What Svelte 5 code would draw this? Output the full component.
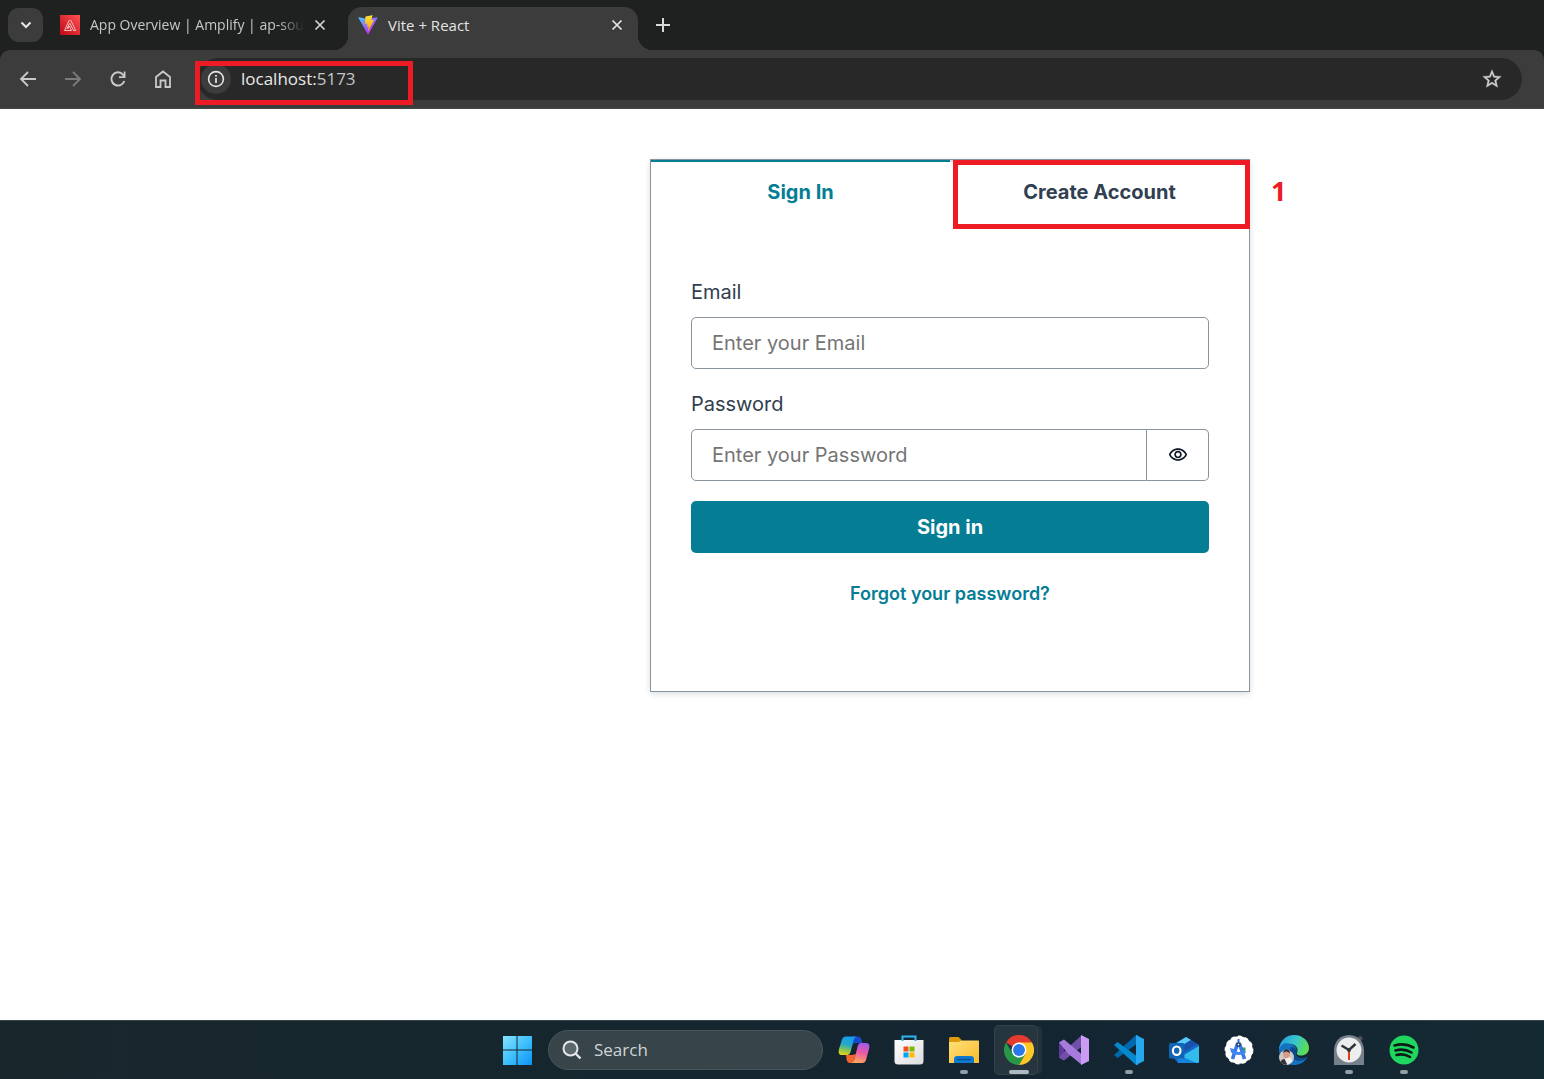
<script>
  let email = $state('');
  let password = $state('');
  let shown = $state(false);
  const tabs = ['Sign In', 'Create Account'];
</script>

<div class="screen">
  <header class="browser">
    <div class="tabstrip">
      <button class="tab-search" aria-label="Search tabs">
        <svg width="12" height="8" viewBox="0 0 12 8"><path d="M1.500 1.500 6 6l4.500-4.500" fill="none" stroke="#e8e8e8" stroke-width="2" /></svg>
      </button>
      <div class="tab">
        <svg class="favicon" width="20" height="20" viewBox="0 0 20 20">
          <defs><linearGradient id="amp" x1="0" y1="1" x2="1" y2="0"><stop stop-color="#bd0816" /><stop offset="1" stop-color="#ff5252" /></linearGradient></defs>
          <path fill="url(#amp)" d="M0 0h20v20H0z" />
          <path d="M9.300 5 4.500 15.500h7L9.300 11l-1.300 2.800M10.500 4.800 15.700 15.500h-2.200L9.600 7.800M9.200 9l-2.400 5" fill="none" stroke="#ffe3e3" stroke-width=".8" />
        </svg>
        <span class="tab-title faded">App Overview | Amplify | ap-sou</span>
        <button class="close" aria-label="Close App Overview">
          <svg width="12" height="12" viewBox="0 0 12 12"><path d="m1.500 1.500 9 9m0-9-9 9" stroke="#d5d5d5" stroke-width="1.700" /></svg>
        </button>
      </div>
      <div class="tab active">
        <svg class="favicon" width="20" height="20" viewBox="0 0 410 404">
          <defs>
            <linearGradient id="v1" x1="6" y1="33" x2="235" y2="344" gradientUnits="userSpaceOnUse"><stop stop-color="#41d1ff" /><stop offset="1" stop-color="#bd34fe" /></linearGradient>
            <linearGradient id="v2" x1="194" y1="9" x2="236" y2="293" gradientUnits="userSpaceOnUse"><stop stop-color="#ffea83" /><stop offset=".08" stop-color="#ffdd35" /><stop offset="1" stop-color="#ffa800" /></linearGradient>
          </defs>
          <path d="M399.600 59.500 215.600 388.500c-3.800 6.800-13.600 6.800-17.400.1L10.600 59.600C6.400 52.300 12.700 43.400 21 44.900l184.200 32.900c1.200.2 2.400.2 3.500 0L389.100 44.900c8.300-1.500 14.600 7.300 10.500 14.600z" fill="url(#v1)" />
          <path d="M293 1.600 156.800 28.300c-2.200.4-3.900 2.300-4 4.600l-8.400 141.400c-.2 3.300 2.900 5.900 6.100 5.200l37.900-8.800c3.600-.8 6.800 2.300 6 5.900l-11.200 55.200c-.8 3.700 2.700 6.900 6.300 5.800l23.400-7.100c3.600-1.100 7.100 2.100 6.300 5.800l-17.900 86.600c-1.100 5.400 6.100 8.400 9.100 3.700l2-3.100 111-221.400c1.900-3.700-1.300-7.900-5.400-7.100l-39 7.500c-3.700.7-6.800-2.700-5.800-6.300l25.500-88.300c1-3.600-2.100-7.100-5.800-6.300z" fill="url(#v2)" />
        </svg>
        <span class="tab-title">Vite + React</span>
        <button class="close" aria-label="Close Vite + React">
          <svg width="12" height="12" viewBox="0 0 12 12"><path d="m1.500 1.500 9 9m0-9-9 9" stroke="#e6e6e6" stroke-width="1.700" /></svg>
        </button>
      </div>
      <button class="new-tab" aria-label="New tab">
        <svg width="14" height="14" viewBox="0 0 14 14"><path d="M7 0v14M0 7h14" stroke="#d8d8d8" stroke-width="2" /></svg>
      </button>
    </div>
    <div class="toolbar">
      <nav class="nav-buttons" aria-label="Browser">
        <button aria-label="Back"><svg width="18" height="18" viewBox="0 0 18 18"><path d="M17 9H2M9 2 2 9l7 7" fill="none" stroke="#c9c9c9" stroke-width="1.800" /></svg></button>
        <button aria-label="Forward"><svg width="18" height="18" viewBox="0 0 18 18"><path d="M1 9h15M9 2l7 7-7 7" fill="none" stroke="#7b7b7b" stroke-width="1.800" /></svg></button>
        <button aria-label="Reload"><svg width="18" height="18" viewBox="0 0 18 18"><path d="M15.300 11A6.600 6.600 0 1 1 14 4.600l1.500 1.900" fill="none" stroke="#c9c9c9" stroke-width="2" /><path d="M16.500 1.500v6.500H10V6.200h4.700V1.500z" fill="#c9c9c9" /></svg></button>
        <button aria-label="Home"><svg width="18" height="20" viewBox="0 0 18 20"><path d="M2 8v10h4.500v-6.500h5V18H16V8L9 2.500z" fill="none" stroke="#c9c9c9" stroke-width="1.800" /></svg></button>
      </nav>
      <div class="omnibox">
        <button class="site-info" aria-label="Site information">
          <svg width="18" height="18" viewBox="0 0 18 18"><circle cx="9" cy="9" r="7.400" fill="none" stroke="#e3e3e3" stroke-width="1.600" /><path d="M9 8v5M9 5v1.700" stroke="#e3e3e3" stroke-width="1.700" /></svg>
        </button>
        <a class="url" href="#top">localhost:<span>5173</span></a>
        <button class="bookmark" aria-label="Bookmark this tab">
          <svg width="22" height="22" viewBox="0 0 24 24"><path fill="#d0d0d0" d="m22 9.240-7.190-.620L12 2 9.190 8.630 2 9.240l5.460 4.730L5.820 21 12 17.270 18.180 21l-1.630-7.030L22 9.240zM12 15.400l-3.760 2.270 1-4.280-3.320-2.880 4.380-.380L12 6.100l1.710 4.040 4.380.380-3.320 2.880 1 4.280L12 15.400z" stroke="#d0d0d0" stroke-width=".4" /></svg>
        </button>
        <div class="mark mark-url"></div>
      </div>
    </div>
  </header>

  <main id="top">
    <section class="card">
      <div class="auth-tabs" role="tablist">
        {#each tabs as tab, i}
          <button role="tab" aria-selected={i === 0} class:selected={i === 0}>{tab}</button>
        {/each}
        <div class="mark mark-tab"></div>
        <span class="step">1</span>
      </div>
      <form onsubmit={(e) => e.preventDefault()}>
        <div class="field">
          <label for="email">Email</label>
          <input id="email" type="email" placeholder="Enter your Email" bind:value={email} />
        </div>
        <div class="field">
          <label for="password">Password</label>
          <div class="password">
            <input id="password" type={shown ? 'text' : 'password'} placeholder="Enter your Password" bind:value={password} />
            <button type="button" aria-label="Show password" onclick={() => (shown = !shown)}>
              <svg width="20" height="20" viewBox="0 0 24 24"><path fill="#0d1926" d="M12 6c3.790 0 7.170 2.130 8.820 5.500C19.170 14.870 15.790 17 12 17s-7.170-2.130-8.820-5.500C4.830 8.130 8.210 6 12 6m0-2C7 4 2.730 7.110 1 11.500 2.730 15.890 7 19 12 19s9.270-3.110 11-7.500C21.270 7.110 17 4 12 4zm0 5a2.500 2.500 0 0 1 0 5 2.500 2.500 0 0 1 0-5m0-2c-2.480 0-4.500 2.020-4.500 4.500S9.520 16 12 16s4.500-2.020 4.500-4.500S14.480 7 12 7z" /></svg>
            </button>
          </div>
        </div>
        <button class="submit" type="submit">Sign in</button>
      </form>
      <div class="forgot"><button>Forgot your password?</button></div>
    </section>
  </main>

  <footer class="taskbar">
    <button class="app" aria-label="Start">
      <svg width="30" height="30" viewBox="0 0 30 30">
        <defs><linearGradient id="win" x1="0" y1="0" x2="1" y2="1"><stop stop-color="#86e3ff" /><stop offset=".5" stop-color="#3fc0fc" /><stop offset="1" stop-color="#0c92f5" /></linearGradient></defs>
        <path fill="url(#win)" d="M1 1h13.500v13.500H1zM15.500 1H30v13.500H15.500zM1 15.500h13.500V30H1zM15.500 15.500H30V30H15.500z" />
      </svg>
    </button>
    <label class="search">
      <svg width="20" height="20" viewBox="0 0 20 20"><circle cx="8.500" cy="8.500" r="7" fill="#5b686e" stroke="#e4e7e8" stroke-width="2" /><path d="m13.500 13.500 5 5" stroke="#e4e7e8" stroke-width="2.400" /></svg>
      <input type="search" placeholder="Search" aria-label="Search" />
    </label>
    <button class="app" aria-label="Copilot">
      <svg width="32" height="30" viewBox="0 0 32 30">
        <defs>
          <linearGradient id="c1" x1=".5" y1="0" x2=".3" y2="1"><stop stop-color="#149cf0" /><stop offset=".45" stop-color="#28a9c4" /><stop offset=".75" stop-color="#8fc74a" /><stop offset="1" stop-color="#e6d21f" /></linearGradient>
          <linearGradient id="c2" x1=".6" y1="0" x2=".4" y2="1"><stop stop-color="#a15bea" /><stop offset=".45" stop-color="#e957a8" /><stop offset="1" stop-color="#ffa65c" /></linearGradient>
        </defs>
        <path d="M14 1.500h6q2.500 0 3.500 3L24.500 8H18q-3 0-4 3z" fill="#1749cb" />
        <path d="M8 20h6l4-1-3 9h-3q-2.500 0-3.300-3z" fill="#f4652d" />
        <path d="M8 1.500h10.500q-2 .5-3 4L12.500 17q-.8 3-3.500 3H4q-4.500 0-3-6L4 4.500Q5 1.500 8 1.500z" fill="url(#c1)" />
        <path d="M24 28H13.500q2-.5 3-4L19.500 12q.8-4 3.500-4h5q4.500 0 3 6l-3 11q-1 3-4 3z" fill="url(#c2)" />
      </svg>
    </button>
    <button class="app" aria-label="Microsoft Store">
      <svg width="30" height="30" viewBox="0 0 30 30">
        <defs><linearGradient id="st" x1="0" y1="0" x2="1" y2="1"><stop stop-color="#fff" /><stop offset="1" stop-color="#dcdcdc" /></linearGradient></defs>
        <path d="M.5 5h29v21q0 3.500-3.500 3.500H4Q.5 29.500.5 26z" fill="url(#st)" />
        <path d="M8.500 6V1.500h13V6" fill="none" stroke="#2fb4f2" stroke-width="2" />
        <path d="M9.500 11.500h5v5h-5z" fill="#f25022" /><path d="M15.500 11.500h5v5h-5z" fill="#7fba00" /><path d="M9.500 17.500h5v5h-5z" fill="#00a4ef" /><path d="M15.500 17.500h5v5h-5z" fill="#ffb900" />
      </svg>
    </button>
    <button class="app running" aria-label="File Explorer">
      <svg width="30" height="30" viewBox="0 0 30 30">
        <defs><linearGradient id="fo" x1="0" y1="0" x2="1" y2="1"><stop stop-color="#ffe07a" /><stop offset="1" stop-color="#fcbb2b" /></linearGradient></defs>
        <path d="M0 3.500Q0 2 1.500 2h8l3 3v5H0z" fill="#dd9a0a" />
        <path d="M0 7h9.500l3-1.500h17q.5 0 .5.500v22H0z" fill="url(#fo)" />
        <path d="M5 28v-4q0-3 3-3h14q3 0 3 3v4z" fill="#1079ce" /><path d="M8.500 24.500h13" stroke="#0a4f97" stroke-width="1.500" />
      </svg>
    </button>
    <button class="app running current" aria-label="Google Chrome">
      <svg width="30" height="30" viewBox="0 0 48 48">
        <path d="M24 24 3.200 12A24 24 0 0 1 44.800 12z" fill="#e33b2e" />
        <path d="M3.200 12A24 24 0 0 0 24 48l10.400-18L24 24 13.600 30z" fill="#269847" />
        <path d="M44.800 12A24 24 0 0 1 24 48l10.400-18L24 12z" fill="#fdc727" />
        <circle cx="24" cy="24" r="12" fill="#fff" /><circle cx="24" cy="24" r="9.500" fill="#2b78ea" />
      </svg>
    </button>
    <button class="app" aria-label="Visual Studio">
      <svg width="30" height="30" viewBox="0 0 30 30">
        <path d="M0 7.500 5 4.500V25.500L0 22.500z" fill="#5d3a9c" />
        <path d="m0 22.500 5 3 18-14V0L9 12.500z" fill="#7150a9" />
        <path d="m0 7.500 5-3L23 19.500V30L9 18.500z" fill="#a77bdc" />
        <path d="m22 0 8 4v22l-8 4z" fill="#cc9bf4" />
      </svg>
    </button>
    <button class="app running" aria-label="Visual Studio Code">
      <svg width="30" height="30" viewBox="0 0 30 30">
        <path d="m0 20 3.500 3L24 8V0h-2z" fill="#0069ad" />
        <path d="m0 10 3.500-3L24 22v8h-2z" fill="#0588ce" />
        <path d="m22 0 8 4v22l-8 4z" fill="#25a8ef" />
      </svg>
    </button>
    <button class="app" aria-label="Outlook">
      <svg width="30" height="28" viewBox="0 0 30 28">
        <path d="M3 9 17 1l13 8v18H9L3 20z" fill="#1469c6" />
        <path d="m6 8 11-7 5 3L9 12z" fill="#56cbfa" /><path d="m22 4 6 4-16 10-4-5z" fill="#1751ac" />
        <path d="m30 10-17 10-4 7h19q2 0 2-2z" fill="#31bceb" /><path d="m9 19 19 8H9z" fill="#1683dc" />
        <rect x="0" y="7" width="15.500" height="15.500" rx="1.500" fill="#1066b5" />
        <ellipse cx="7.700" cy="14.700" rx="3.800" ry="4.200" fill="none" stroke="#fff" stroke-width="2.200" />
      </svg>
    </button>
    <button class="app" aria-label="Android Studio">
      <svg width="30" height="30" viewBox="0 0 30 30">
        <circle cx="15" cy="15" r="13.700" fill="#fff" stroke="#fff" stroke-width="1.400" stroke-dasharray="4 3" />
        <path d="M17 12.500h4.500V18H18z" fill="#31a350" /><path d="m6 13 4 1 2 4-5-1z" fill="#4285f4" />
        <path d="M13.700 8 8.500 24M15.300 8l5.200 16" stroke="#3977e7" stroke-width="3.600" /><path d="M8 16.500q7 4 13 0" fill="none" stroke="#4285f4" stroke-width="3" />
        <path d="M13.500 4h2v4h-2z" fill="#3770da" /><circle cx="14.500" cy="9.500" r="1.600" fill="#fff" stroke="#26334d" stroke-width="1.400" />
      </svg>
    </button>
    <button class="app" aria-label="Microsoft Edge">
      <svg width="30" height="30" viewBox="0 0 30 30">
        <defs><linearGradient id="ed" x1="0" y1=".3" x2="1" y2=".6"><stop stop-color="#289bdf" /><stop offset=".5" stop-color="#36c7cc" /><stop offset="1" stop-color="#62df45" /></linearGradient></defs>
        <path d="M0 13C2 4 8 0 15 0c9 0 15 6.500 15 13 0 5-4 7.500-8 7.500-3.500 0-5-1.500-4-3 2-3.500-1-8.500-7-8.500C6 9 2 11 0 15z" fill="url(#ed)" />
        <path d="M0 15C1.500 9 6 7.500 10 8.500c6 1 8 5 7.500 7.500-3 6 4 9 11 6C25 28 20 30 15 30 6 30 0 23 0 15z" fill="#1572c3" />
        <path d="M12 12c-3 5-1 12 6 13.500 5 1 9-1.500 10.500-3.500-7 3-14 0-11-6 0-2-2-4-5.500-4z" fill="#0e498d" />
        <circle cx="7.500" cy="22.500" r="7.500" fill="#cfcac5" /><circle cx="7.500" cy="20" r="3.300" fill="#d69c87" /><path d="M4 18q1-4 4-3.500t3 4q-2-2-4-2z" fill="#39282a" /><path d="M1.500 27q1-3 4-3l3 5.500Q4 30.500 1.500 27z" fill="#34333b" /><path d="m6 24 5-2 2.500 4-5 4z" fill="#f2eeee" />
      </svg>
    </button>
    <button class="app running" aria-label="Clock">
      <svg width="30" height="30" viewBox="0 0 30 30">
        <path d="m23 4 3-3.500 3 3L26 7z" fill="#505153" /><path d="M0 15Q1 1 15 0q14 1 15 15v15H0z" fill="#77818b" />
        <circle cx="15" cy="15" r="12.500" fill="#eceded" /><path d="M15 15v10" stroke="#da4013" stroke-width="2" /><path d="m7.500 10.500 7.500 4.500 6.500-6" fill="none" stroke="#303438" stroke-width="2.500" /><circle cx="15" cy="15" r="2" fill="#303438" />
      </svg>
    </button>
    <button class="app running" aria-label="Spotify">
      <svg width="30" height="30" viewBox="0 0 30 30"><circle cx="15" cy="15" r="14.500" fill="#1fd75f" /><path d="M5.500 10.500q10-3 19 2M6.500 15.500q8.500-2.500 16 2M7.500 20q7-2 13.500 2" fill="none" stroke="#0d1b16" stroke-width="2.600" stroke-linecap="round" /></svg>
    </button>
  </footer>
</div>

<style>
  :global(body) { margin: 0; background: #fff; }
  .screen { display: flex; flex-direction: column; min-height: 100vh; font-family: 'Open Sans', 'Noto Sans', sans-serif; }
  button { padding: 0; border: 0; background: none; font: inherit; color: inherit; }
  button, label { display: flex; align-items: center; justify-content: center; }
  svg { display: block; flex: none; }
  input { font: inherit; border: 0; outline: 0; min-width: 0; box-sizing: border-box; }
  *, *::before, *::after { box-sizing: border-box; }

  .browser { background: #1f2120; }
  .tabstrip { display: flex; height: 50px; padding-left: 8px; }
  .tab-search { width: 35px; height: 34px; margin-top: 8px; border-radius: 11px; background: #3c3c3c; }
  .tab { display: flex; align-items: center; width: 288px; margin-left: 7px; padding: 0 12px 0 10px; height: 36px; margin-top: 7px; color: #c8c8c8; font-size: 15px; }
  .tab-title { flex: 1; margin: 0 10px; white-space: nowrap; line-height: 24px; }
  .faded { font-size: 14px; -webkit-mask-image: linear-gradient(90deg, #000 88%, transparent); mask-image: linear-gradient(90deg, #000 88%, transparent); }
  .close { width: 12px; height: 12px; }
  .tab.active { position: relative; width: 290px; height: 43px; margin-left: 10px; padding-bottom: 7px; padding-right: 15px; border-radius: 14px 14px 0 0; background: #3c3c3c; color: #e3e3e3; }
  .tab.active::before, .tab.active::after { content: ''; position: absolute; bottom: 0; width: 14px; height: 14px; }
  .tab.active::before { right: 100%; background: radial-gradient(circle at 0 0, transparent 14px, #3c3c3c 14px); }
  .tab.active::after { left: 100%; background: radial-gradient(circle at 100% 0, transparent 14px, #3c3c3c 14px); }
  .new-tab { width: 50px; height: 50px; }
  .toolbar { display: flex; align-items: center; height: 59px; padding: 0 22px 1px 5px; border-radius: 10px 10px 0 0; background: #3c3c3c; border-bottom: 1px solid #484748; }
  .nav-buttons { display: flex; margin-right: 12px; }
  .nav-buttons button { width: 45px; height: 40px; }
  .omnibox { position: relative; flex: 1; display: flex; align-items: center; height: 42px; border-radius: 21px; background: #282828; padding: 0 19px 0 4px; }
  .site-info { width: 30px; height: 30px; border-radius: 50%; background: #3c3c3c; }
  .url { flex: 1; margin-left: 10px; font-size: 17px; line-height: 24px; color: #e8e8e8; text-decoration: none; }
  .url span { color: #c5c5c5; }
  .mark { position: absolute; border: 5px solid #ed1c24; pointer-events: none; }
  .mark-url { left: -2px; top: 3px; width: 218px; height: 44px; }

  main { flex: 1; padding: 50px 20px 50px 376px; font-family: Inter, sans-serif; font-size: 20px; line-height: 30px; color: #304050; }
  .card { max-width: 600px; margin: 0 auto; border: 1px solid #89949f; background: #fff; box-shadow: 0 2px 6px rgba(13, 26, 38, 0.15); padding-bottom: 82px; }
  .auth-tabs { position: relative; display: grid; grid-template-columns: 1fr 1fr; }
  .auth-tabs button { padding: 15px 20px; border-top: 2px solid #dcdee0; font-weight: 700; }
  .auth-tabs .selected { color: #047d95; border-color: #047d95; }
  .mark-tab { left: 302px; right: -1px; top: 0; height: 69px; }
  .step { position: absolute; left: calc(100% + 22px); top: 13px; font-family: 'Open Sans', sans-serif; font-size: 27px; line-height: 36px; font-weight: 700; color: #ed1c24; }
  form { display: flex; flex-direction: column; gap: 20px; padding: 55px 40px 20px; }
  .field { display: flex; flex-direction: column; gap: 10px; }
  .field label { justify-content: flex-start; }
  .field input { width: 100%; height: 52px; padding: 0 20px; border: 1px solid #89949f; border-radius: 5px; background: #fff; color: #304050; }
  .field input::placeholder { color: #757575; opacity: 1; }
  .password { display: flex; }
  .password input { border-radius: 5px 0 0 5px; flex: 1; }
  .password button { width: 62px; border: 1px solid #89949f; border-left: 0; border-radius: 0 5px 5px 0; }
  .submit { height: 52px; border-radius: 5px; background: #047d95; color: #fff; font-weight: 700; }
  .forgot { display: flex; justify-content: center; padding-top: 6px; }
  .forgot button { font-size: 18px; font-weight: 600; color: #047d95; }

  .taskbar { display: flex; align-items: center; justify-content: center; height: 59px; padding-left: 376px; background: linear-gradient(90deg, #19272d, #15262e 40%, #142533 75%, #142a32); border-top: 1px solid #35444a; }
  .app { position: relative; width: 55px; height: 50px; }
  .running::after { content: ''; position: absolute; bottom: 1px; left: calc(50% - 4px); width: 8px; height: 4px; border-radius: 2px; background: #929da4; }
  .current::before { content: ''; position: absolute; inset: 0 8px 0 3px; border: 1px solid #34434b; border-radius: 5px; background: #26353e; box-shadow: 5px 0 0 -1px #22313a; }
  .current svg { position: relative; }
  .current::after { left: calc(50% - 10px); width: 20px; background: #aebac2; }
  .search { width: 275px; height: 40px; margin: 0 3px 0 4px; padding: 0 13px; gap: 10px; border: 1px solid #48555b; border-radius: 20px; background: #37444a; }
  .search input { flex: 1; background: none; font-size: 17px; line-height: 24px; color: #fff; }
  .search input::placeholder { color: #d0d4d6; opacity: 1; }
</style>
